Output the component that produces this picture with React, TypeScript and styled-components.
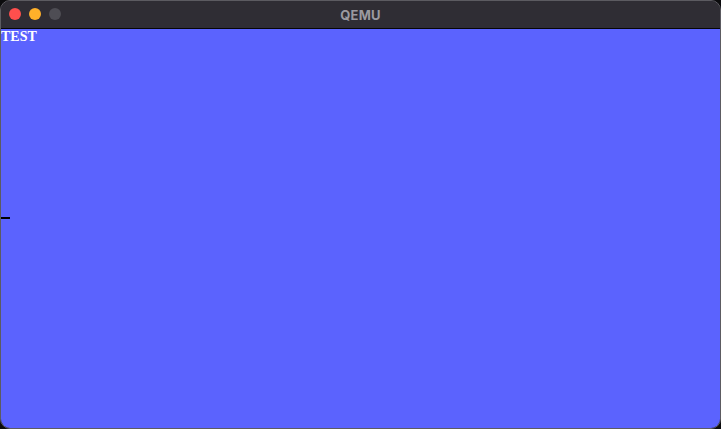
import React from "react";
import styled, { createGlobalStyle } from "styled-components";

const Global = createGlobalStyle`
  html, body { margin: 0; padding: 0; background: #0b0b0d; }
  #root { width: 721px; height: 429px; }
`;

const Window = styled.div`
  box-sizing: border-box;
  width: 721px;
  height: 429px;
  border: 1px solid #5c5b61;
  border-radius: 10px;
  overflow: hidden;
  display: flex;
  flex-direction: column;
  background: #2f2d34;
`;

const TitleBar = styled.div`
  position: relative;
  height: 27px;
  flex: none;
  display: flex;
  align-items: center;
  justify-content: center;
  border-bottom: 1px solid #060608;
  background: #2f2d34;
`;

const Lights = styled.div`
  position: absolute;
  left: 8px;
  top: 7px;
  display: flex;
  gap: 8px;
`;

const Light = styled.span<{ $c: string }>`
  width: 12px;
  height: 12px;
  border-radius: 50%;
  background: ${(p) => p.$c};
`;

const Title = styled.div`
  font-family: "Inter", "Liberation Sans", sans-serif;
  font-weight: 700;
  font-size: 13px;
  color: #9b9aa0;
  letter-spacing: 0.2px;
`;

const Screen = styled.div`
  flex: 1;
  background: #5b63fe;
  display: flex;
  flex-direction: column;
`;

const Text = styled.div`
  font-family: "Liberation Serif", "DejaVu Serif", serif;
  font-weight: 700;
  font-size: 14px;
  line-height: 14px;
  color: #ffffff;
  padding-top: 1px;
  margin-left: 0px;
`;

const Cursor = styled.div`
  width: 9px;
  height: 2px;
  background: #000;
  margin-top: 173px;
`;

export default function App() {
  return (
    <>
      <Global />
      <Window>
        <TitleBar>
          <Lights>
            <Light $c="#fe4f4d" />
            <Light $c="#feb02a" />
            <Light $c="#4e4d54" />
          </Lights>
          <Title>QEMU</Title>
        </TitleBar>
        <Screen>
          <Text>TEST</Text>
          <Cursor />
        </Screen>
      </Window>
    </>
  );
}
